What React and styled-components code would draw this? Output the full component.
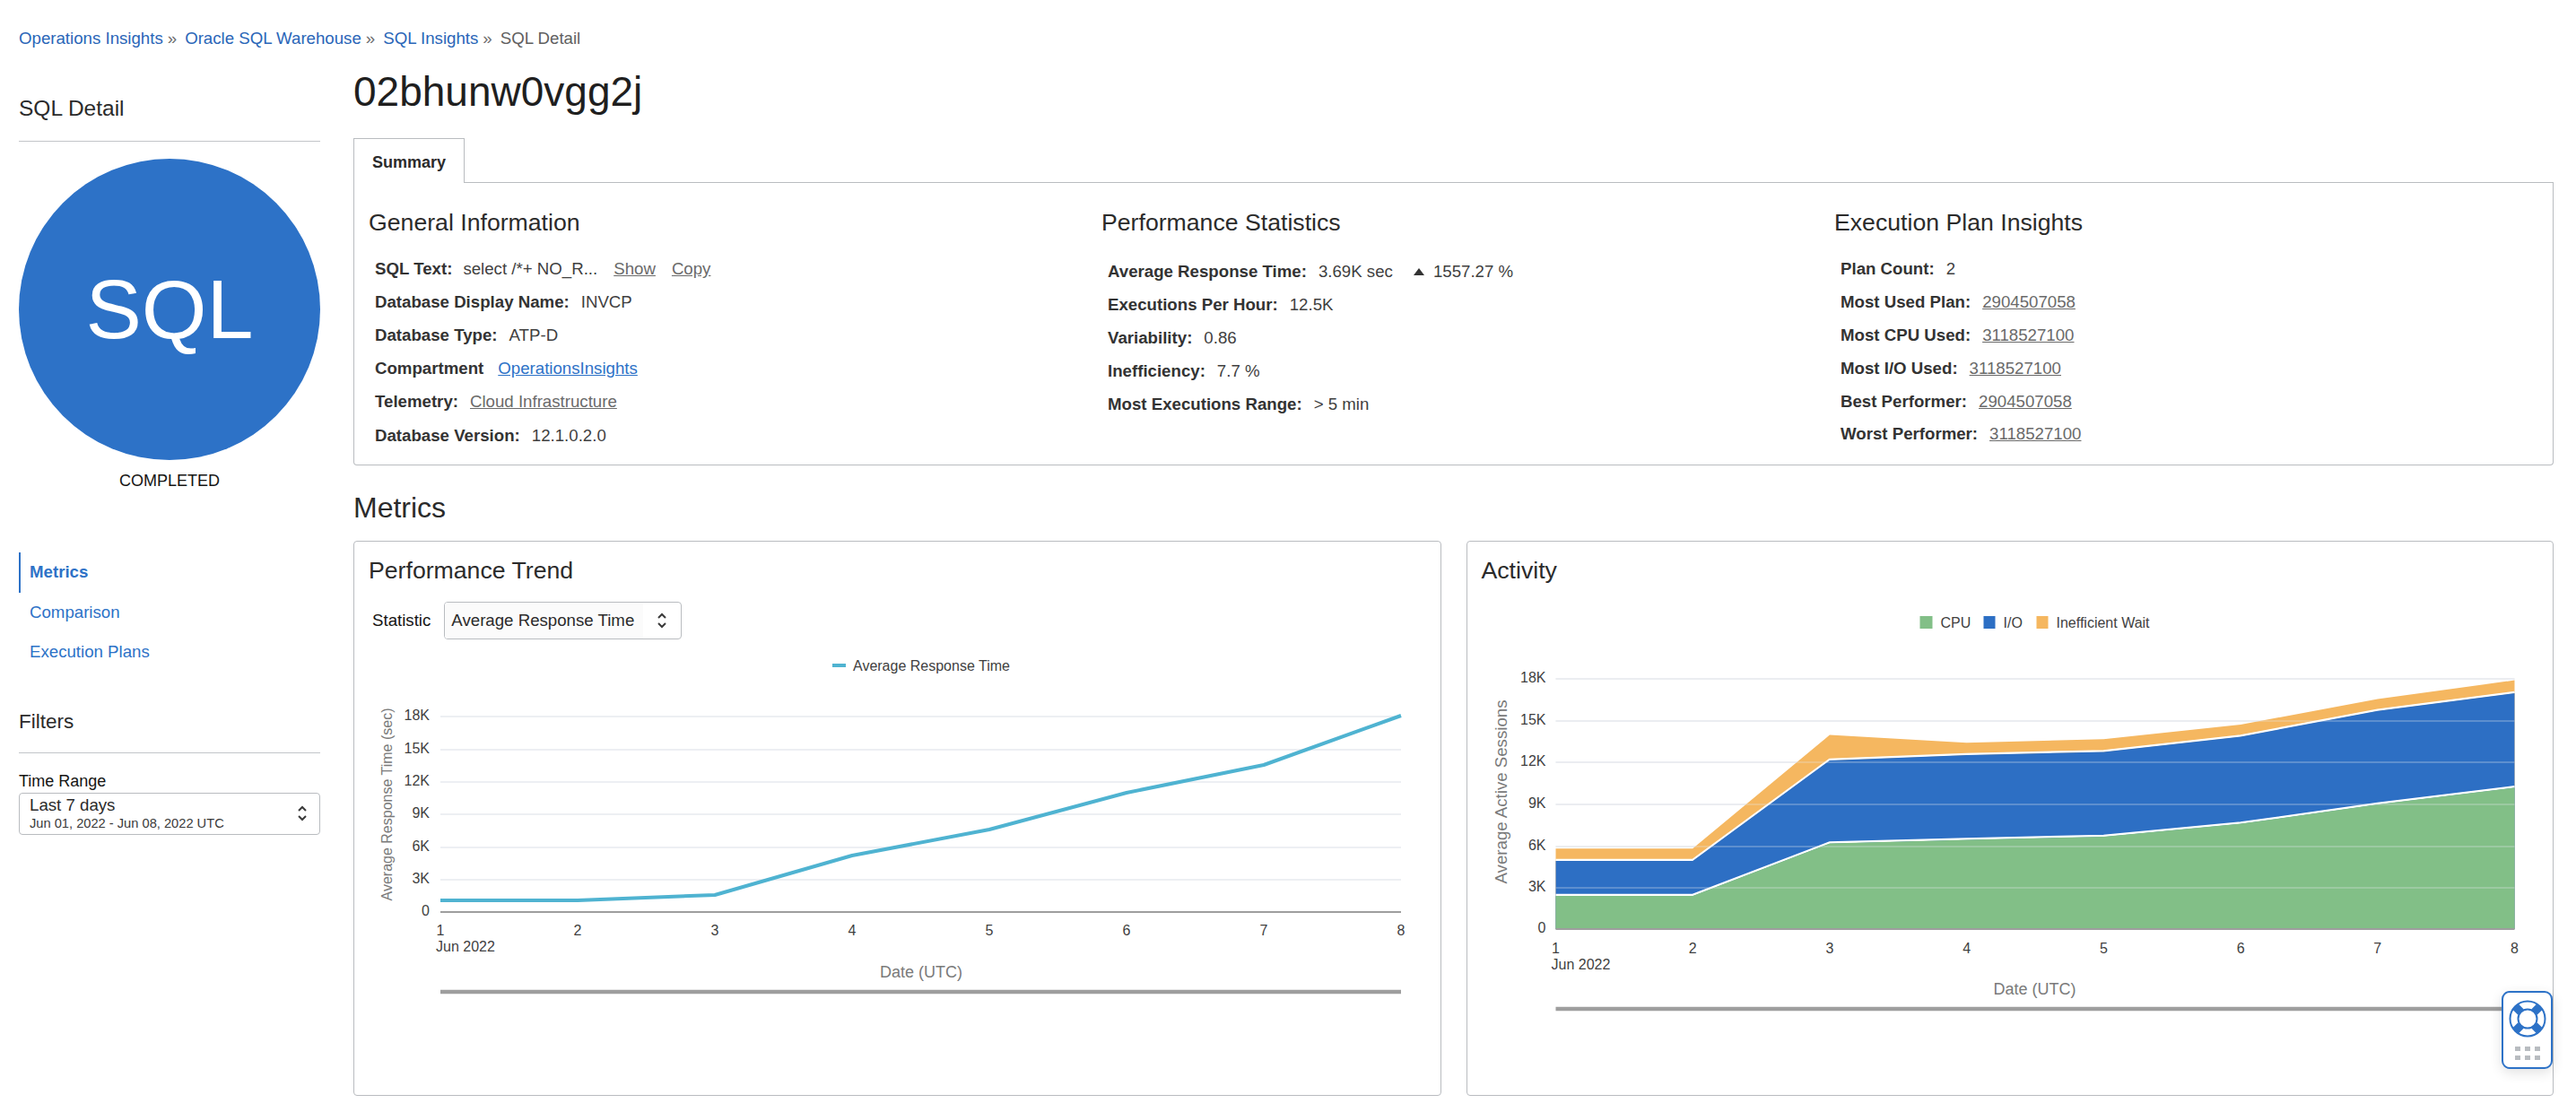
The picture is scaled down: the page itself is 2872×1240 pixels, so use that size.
import styled, { createGlobalStyle } from 'styled-components';

const GlobalStyle = createGlobalStyle`
  html, body {
    margin: 0;
    background: #fff;
    color: #161513;
    font-family: "Liberation Sans", Arial, sans-serif;
    font-size: 18.67px;
  }
`

const generalRows = [
  { label: 'Database Display Name:', value: 'INVCP' },
  { label: 'Database Type:', value: 'ATP-D' },
]

const statsRows = [
  { label: 'Executions Per Hour:', value: '12.5K' },
  { label: 'Variability:', value: '0.86' },
  { label: 'Inefficiency:', value: '7.7 %' },
  { label: 'Most Executions Range:', value: '> 5 min' },
]

const planRows = [
  { label: 'Most Used Plan:', link: '2904507058' },
  { label: 'Most CPU Used:', link: '3118527100' },
  { label: 'Most I/O Used:', link: '3118527100' },
  { label: 'Best Performer:', link: '2904507058' },
  { label: 'Worst Performer:', link: '3118527100' },
]

const trendTicks = [
  ['18K', 798], ['15K', 835], ['12K', 871], ['9K', 907], ['6K', 944], ['3K', 980], ['0', 1016],
]
const activityTicks = [
  ['18K', 756], ['15K', 803], ['12K', 849], ['9K', 896], ['6K', 943], ['3K', 989], ['0', 1035],
]

const trendX = [491, 644, 797, 950, 1103, 1256, 1409, 1562]
const trendLine = [1003, 1003, 997, 953, 924, 883, 852, 797]

const activityX = [1734, 1886.7, 2039.4, 2192.1, 2344.9, 2497.6, 2650.3, 2803]
const cpuTop = [997, 997, 938.5, 934.4, 931, 916.6, 895, 876.3]
const ioTop = [958, 958, 846, 840, 836.5, 819.5, 790.8, 771]
const waitTop = [945.2, 945.2, 818.6, 827.3, 823.2, 807, 778.4, 757.6]

const toPoints = (xs, ys) => xs.map((x, i) => `${x},${ys[i]}`).join(' ')

function Chevrons() {
  return (
    <svg width="14" height="22" viewBox="0 0 14 22" fill="none" stroke="#3a3a3a" strokeWidth="2">
      <path d="M3 8l4-4 4 4" />
      <path d="M3 14l4 4 4-4" />
    </svg>
  )
}

function LifeRing() {
  return (
    <svg width="42" height="42" viewBox="0 0 42 42" fill="none" stroke="#2d72c7">
      <circle cx="21" cy="21" r="19.5" strokeWidth="2" />
      <circle cx="21" cy="21" r="10.5" strokeWidth="2" />
      <path d="M13.6 13.6L7.2 7.2M28.4 13.6L34.8 7.2M13.6 28.4L7.2 34.8M28.4 28.4L34.8 34.8" strokeWidth="9" />
    </svg>
  )
}

function XAxis({ xs, tickY, monthY, titleX, titleY, barY, barEnd }) {
  return (
    <>
      {xs.map((x, i) => (
        <AxisText key={x} x={x} y={tickY} textAnchor="middle">{i + 1}</AxisText>
      ))}
      <AxisText x={xs[0] - 5} y={monthY}>Jun 2022</AxisText>
      <AxisTitle x={titleX} y={titleY} textAnchor="middle">Date (UTC)</AxisTitle>
      <line x1={xs[0]} x2={barEnd} y1={barY} y2={barY} stroke="#9e9e9e" strokeWidth="4.5" />
    </>
  )
}

function TrendChart() {
  return (
    <ChartSvg $top={13} width="1210" height="400" viewBox="395 725 1210 400">
      <rect x="928" y="739" width="15" height="4" fill="#4fb3d1" />
      <AxisText x="951" y="747">Average Response Time</AxisText>
      {trendTicks.map(([label, y]) => (
        <g key={label}>
          <AxisText x="479" y={y + 4} textAnchor="end">{label}</AxisText>
          {label !== '0' && <line x1="491" x2="1562" y1={y} y2={y} stroke="#e7eaef" strokeWidth="1.5" />}
        </g>
      ))}
      <line x1="491" x2="1562" y1="1016" y2="1016" stroke="#9e9e9e" strokeWidth="2" />
      <polyline points={toPoints(trendX, trendLine)} fill="none" stroke="#4fb3d1" strokeWidth="4" strokeLinejoin="round" />
      <VerticalTitle transform="translate(437 896) rotate(-90)" textAnchor="middle" fontSize="16">
        Average Response Time (sec)
      </VerticalTitle>
      <XAxis xs={trendX} tickY={1042} monthY={1060} titleX={1027} titleY={1089} barY={1105} barEnd={1562} />
    </ChartSvg>
  )
}

function ActivityChart() {
  const close = `${activityX[7]},1035 ${activityX[0]},1035`
  return (
    <ChartSvg $top={17} width="1210" height="470" viewBox="1635.5 670 1210 470">
      <rect x="2140" y="686" width="14" height="14" fill="#82bf87" />
      <AxisText x="2163" y="699">CPU</AxisText>
      <rect x="2211" y="686" width="13" height="14" fill="#2d6fc4" />
      <AxisText x="2233" y="699">I/O</AxisText>
      <rect x="2270" y="686" width="13" height="14" fill="#f5b760" />
      <AxisText x="2292" y="699">Inefficient Wait</AxisText>
      {activityTicks.map(([label, y]) => (
        <g key={label}>
          <AxisText x="1723" y={y + 4} textAnchor="end">{label}</AxisText>
          <line x1="1734" x2="2803" y1={y} y2={y} stroke="#e7eaef" strokeWidth="1.5" />
        </g>
      ))}
      <polygon points={`${toPoints(activityX, waitTop)} ${close}`} fill="#f5b760" />
      <polyline points={toPoints(activityX, ioTop)} fill="none" stroke="#fff" strokeWidth="2.5" />
      <polygon points={`${toPoints(activityX, ioTop.map(y => y + 1))} ${close}`} fill="#2d6fc4" />
      <polyline points={toPoints(activityX, cpuTop)} fill="none" stroke="#fff" strokeWidth="2.5" />
      <polygon points={`${toPoints(activityX, cpuTop.map(y => y + 1))} ${close}`} fill="#82bf87" />
      {activityTicks.slice(0, 6).map(([label, y]) => (
        <line key={label} x1="1734" x2="2803" y1={y} y2={y} stroke="#e7eaef" strokeWidth="1.5" opacity="0.35" />
      ))}
      <line x1="1734" x2="2803" y1="1035" y2="1035" stroke="#9e9e9e" strokeWidth="2" />
      <VerticalTitle transform="translate(1679 882) rotate(-90)" textAnchor="middle" fontSize="18.67">
        Average Active Sessions
      </VerticalTitle>
      <XAxis xs={activityX} tickY={1062} monthY={1080} titleX={2268} titleY={1108} barY={1124} barEnd={2803} />
    </ChartSvg>
  )
}

function App() {
  return (
    <Page>
      <GlobalStyle />

      <Breadcrumbs>
        <Crumb>Operations Insights</Crumb><Sep>»</Sep>
        <Crumb>Oracle SQL Warehouse</Crumb><Sep>»</Sep>
        <Crumb>SQL Insights</Crumb><Sep>»</Sep>
        <Current>SQL Detail</Current>
      </Breadcrumbs>

      <Layout>
        <Sidebar>
          <SideHeading>SQL Detail</SideHeading>
          <Badge>SQL</Badge>
          <Status>COMPLETED</Status>

          <Nav>
            <NavItem $active>Metrics</NavItem>
            <NavItem>Comparison</NavItem>
            <NavItem>Execution Plans</NavItem>
          </Nav>

          <FilterHeading>Filters</FilterHeading>
          <FilterLabel>Time Range</FilterLabel>
          <RangeSelect>
            <div>
              <RangeValue>Last 7 days</RangeValue>
              <RangeDates>Jun 01, 2022 - Jun 08, 2022 UTC</RangeDates>
            </div>
            <Chevrons />
          </RangeSelect>
        </Sidebar>

        <Main>
          <Title>02bhunw0vgg2j</Title>

          <Tabs>
            <Tab>Summary</Tab>
          </Tabs>
          <Summary>
            <Column>
              <ColumnTitle>General Information</ColumnTitle>
              <Rows $top={16}>
                <Row>
                  <Label>SQL Text:</Label>
                  <Value $gap={12}>select /*+ NO_R...</Value>
                  <PlainLink $gap={18}>Show</PlainLink>
                  <PlainLink $gap={18}>Copy</PlainLink>
                </Row>
                {generalRows.map(row => (
                  <Row key={row.label}>
                    <Label>{row.label}</Label>
                    <Value>{row.value}</Value>
                  </Row>
                ))}
                <Row>
                  <Label>Compartment</Label>
                  <BlueLink>OperationsInsights</BlueLink>
                </Row>
                <Row>
                  <Label>Telemetry:</Label>
                  <PlainLink $gap={13}>Cloud Infrastructure</PlainLink>
                </Row>
                <Row $shift={2}>
                  <Label>Database Version:</Label>
                  <Value>12.1.0.2.0</Value>
                </Row>
              </Rows>
            </Column>

            <Column>
              <ColumnTitle>Performance Statistics</ColumnTitle>
              <Rows $top={19}>
                <Row>
                  <Label>Average Response Time:</Label>
                  <Value>3.69K sec</Value>
                  <UpArrow />
                  <Value $gap={10}>1557.27 %</Value>
                </Row>
                {statsRows.map(row => (
                  <Row key={row.label}>
                    <Label>{row.label}</Label>
                    <Value>{row.value}</Value>
                  </Row>
                ))}
              </Rows>
            </Column>

            <Column>
              <ColumnTitle>Execution Plan Insights</ColumnTitle>
              <Rows $top={16}>
                <Row>
                  <Label>Plan Count:</Label>
                  <Value>2</Value>
                </Row>
                {planRows.map(row => (
                  <Row key={row.label}>
                    <Label>{row.label}</Label>
                    <PlainLink $gap={13}>{row.link}</PlainLink>
                  </Row>
                ))}
              </Rows>
            </Column>
          </Summary>

          <SectionTitle>Metrics</SectionTitle>

          <Cards>
            <Card>
              <CardTitle>Performance Trend</CardTitle>
              <StatisticRow>
                <span>Statistic</span>
                <StatisticSelect>
                  <StatisticValue>Average Response Time</StatisticValue>
                  <Chevrons />
                </StatisticSelect>
              </StatisticRow>
              <TrendChart />
            </Card>
            <Card>
              <CardTitle>Activity</CardTitle>
              <ActivityChart />
            </Card>
          </Cards>
        </Main>
      </Layout>

      <HelpWidget>
        <LifeRing />
        <Grip>
          {[0, 1, 2, 3, 4, 5].map(i => <i key={i} />)}
        </Grip>
      </HelpWidget>
    </Page>
  );
}

export default App;

const Page = styled.div`
  position: relative;
  box-sizing: border-box;
  height: 1240px;
  overflow: hidden;
  padding: 32px 25px 0 21px;
`

const Breadcrumbs = styled.nav`
  display: flex;
  align-items: center;
  height: 22px;
  line-height: 22px;
`

const Crumb = styled.a`
  color: #2a66b8;
`

const Sep = styled.span`
  color: #6f6f6f;
  margin: 0 9px 0 5px;
`

const Current = styled.span`
  color: #5f5f5f;
`

const Layout = styled.div`
  display: grid;
  grid-template-columns: 336px 1fr;
  column-gap: 37px;
  margin-top: 20px;
`

const Sidebar = styled.aside`
  padding-top: 32px;
`

const SideHeading = styled.h2`
  margin: 0;
  font-size: 24.5px;
  font-weight: 400;
  line-height: 30px;
  color: #2b2b2b;
  padding-bottom: 21px;
  border-bottom: 1px solid #c2c5c9;
`

const Badge = styled.div`
  display: flex;
  align-items: center;
  justify-content: center;
  width: 336px;
  height: 336px;
  margin-top: 19px;
  border-radius: 50%;
  background: #2d72c7;
  color: #fff;
  font-size: 93.5px;
`

const Status = styled.div`
  margin-top: 12px;
  font-size: 18px;
  line-height: 22px;
  text-align: center;
`

const Nav = styled.div`
  margin-top: 69px;
`

const NavItem = styled.a`
  display: flex;
  align-items: center;
  height: 44.6px;
  padding-left: 10px;
  border-left: 2px solid ${props => props.$active ? '#2d72c7' : 'transparent'};
  color: #2d72c7;
  font-weight: ${props => props.$active ? 700 : 400};
`

const FilterHeading = styled(SideHeading)`
  margin-top: 41px;
  font-size: 22.5px;
  line-height: 28px;
  padding-bottom: 20px;
`

const FilterLabel = styled.div`
  margin-top: 20px;
  font-size: 18px;
  line-height: 22px;
`

const RangeSelect = styled.div`
  box-sizing: border-box;
  display: flex;
  align-items: center;
  justify-content: space-between;
  height: 47px;
  margin-top: 2px;
  padding: 0 12px 0 11px;
  border: 1px solid #b9bcc0;
  border-radius: 4px;
`

const RangeValue = styled.div`
  line-height: 22px;
  color: #2b2b2b;
`

const RangeDates = styled.div`
  font-size: 14.67px;
  line-height: 18px;
  color: #3a3a3a;
`

const Main = styled.main`
  min-width: 0;
`

const Title = styled.h1`
  margin: 0;
  font-size: 46px;
  font-weight: 400;
  line-height: 56px;
  color: #1f1f1f;
`

const Tabs = styled.div`
  display: flex;
  margin-top: 24px;
  height: 49px;
  border-bottom: 1px solid #b9bcc0;
`

const Tab = styled.div`
  box-sizing: border-box;
  display: flex;
  align-items: center;
  justify-content: center;
  width: 124px;
  height: 50px;
  padding-top: 4px;
  background: #fff;
  border: 1px solid #b9bcc0;
  border-bottom: 0;
  font-size: 18px;
  font-weight: 700;
  color: #2b2b2b;
`

const Summary = styled.section`
  box-sizing: border-box;
  display: grid;
  grid-template-columns: repeat(3, 817px);
  height: 315px;
  padding: 26px 0 0 16px;
  border: 1px solid #b9bcc0;
  border-top: 0;
  border-radius: 0 0 4px 4px;
`

const Column = styled.div`
  min-width: 0;
`

const ColumnTitle = styled.h3`
  margin: 0;
  font-size: 26.67px;
  font-weight: 400;
  line-height: 36px;
  color: #2b2b2b;
`

const Rows = styled.div`
  margin-top: ${props => props.$top}px;
  padding-left: 7px;
`

const Row = styled.div`
  display: flex;
  align-items: center;
  height: 36.8px;
  margin-top: ${props => props.$shift || 0}px;
`

const Label = styled.span`
  font-weight: 700;
  color: #333;
`

const Value = styled.span`
  margin-left: ${props => props.$gap || 13}px;
  color: #3f3f3f;
`

const PlainLink = styled.a`
  margin-left: ${props => props.$gap}px;
  color: #6a6a6a;
  text-decoration: underline;
`

const BlueLink = styled.a`
  margin-left: 16px;
  color: #2d72c7;
  text-decoration: underline;
`

const UpArrow = styled.span`
  width: 0;
  height: 0;
  margin-left: 23px;
  border: 6px solid transparent;
  border-top: 0;
  border-bottom: 8px solid #333;
`

const SectionTitle = styled.h2`
  margin: 27px 0 0;
  font-size: 32px;
  font-weight: 400;
  line-height: 40px;
  color: #2b2b2b;
`

const Cards = styled.div`
  display: grid;
  grid-template-columns: 1fr 1fr;
  column-gap: 28px;
  margin-top: 17px;
`

const Card = styled.div`
  box-sizing: border-box;
  height: 619px;
  padding: 14px 16px 0;
  border: 1px solid #b9bcc0;
  border-radius: 4px;
  overflow: hidden;
`

const CardTitle = styled.h3`
  margin: 0;
  font-size: 26.67px;
  font-weight: 400;
  line-height: 36px;
  color: #2b2b2b;
`

const StatisticRow = styled.div`
  display: flex;
  align-items: center;
  gap: 15px;
  margin-top: 17px;
  padding-left: 4px;
`

const StatisticSelect = styled.div`
  box-sizing: border-box;
  display: flex;
  align-items: center;
  width: 265px;
  height: 42px;
  border: 1px solid #b9bcc0;
  border-radius: 4px;
  overflow: hidden;
`

const StatisticValue = styled.div`
  display: flex;
  align-items: center;
  height: 100%;
  width: 221px;
  padding-left: 7px;
  box-sizing: border-box;
  background: #fbfbfb;
  color: #2b2b2b;
  margin-right: 14px;
`

const ChartSvg = styled.svg`
  display: block;
  margin: ${props => props.$top}px -16px 0;
`

const AxisText = styled.text`
  font-family: "Liberation Sans", Arial, sans-serif;
  font-size: 16px;
  fill: #3f3f3f;
`

const AxisTitle = styled.text`
  font-family: "Liberation Sans", Arial, sans-serif;
  font-size: 18px;
  fill: #7a7a7a;
`

const VerticalTitle = styled.text`
  font-family: "Liberation Sans", Arial, sans-serif;
  fill: #7a7a7a;
`

const HelpWidget = styled.div`
  position: absolute;
  top: 1105px;
  right: 26px;
  box-sizing: border-box;
  display: flex;
  flex-direction: column;
  align-items: center;
  width: 57px;
  height: 87px;
  padding-top: 8px;
  background: #fff;
  border: 2px solid #2d72c7;
  border-radius: 9px;
  box-shadow: 0 4px 14px rgba(0, 0, 0, .12);
`

const Grip = styled.div`
  display: grid;
  grid-template-columns: repeat(3, 6px);
  gap: 5px 5px;
  margin-top: 10px;

  i {
    display: block;
    height: 5px;
    background: #b8bcc0;
  }
`
